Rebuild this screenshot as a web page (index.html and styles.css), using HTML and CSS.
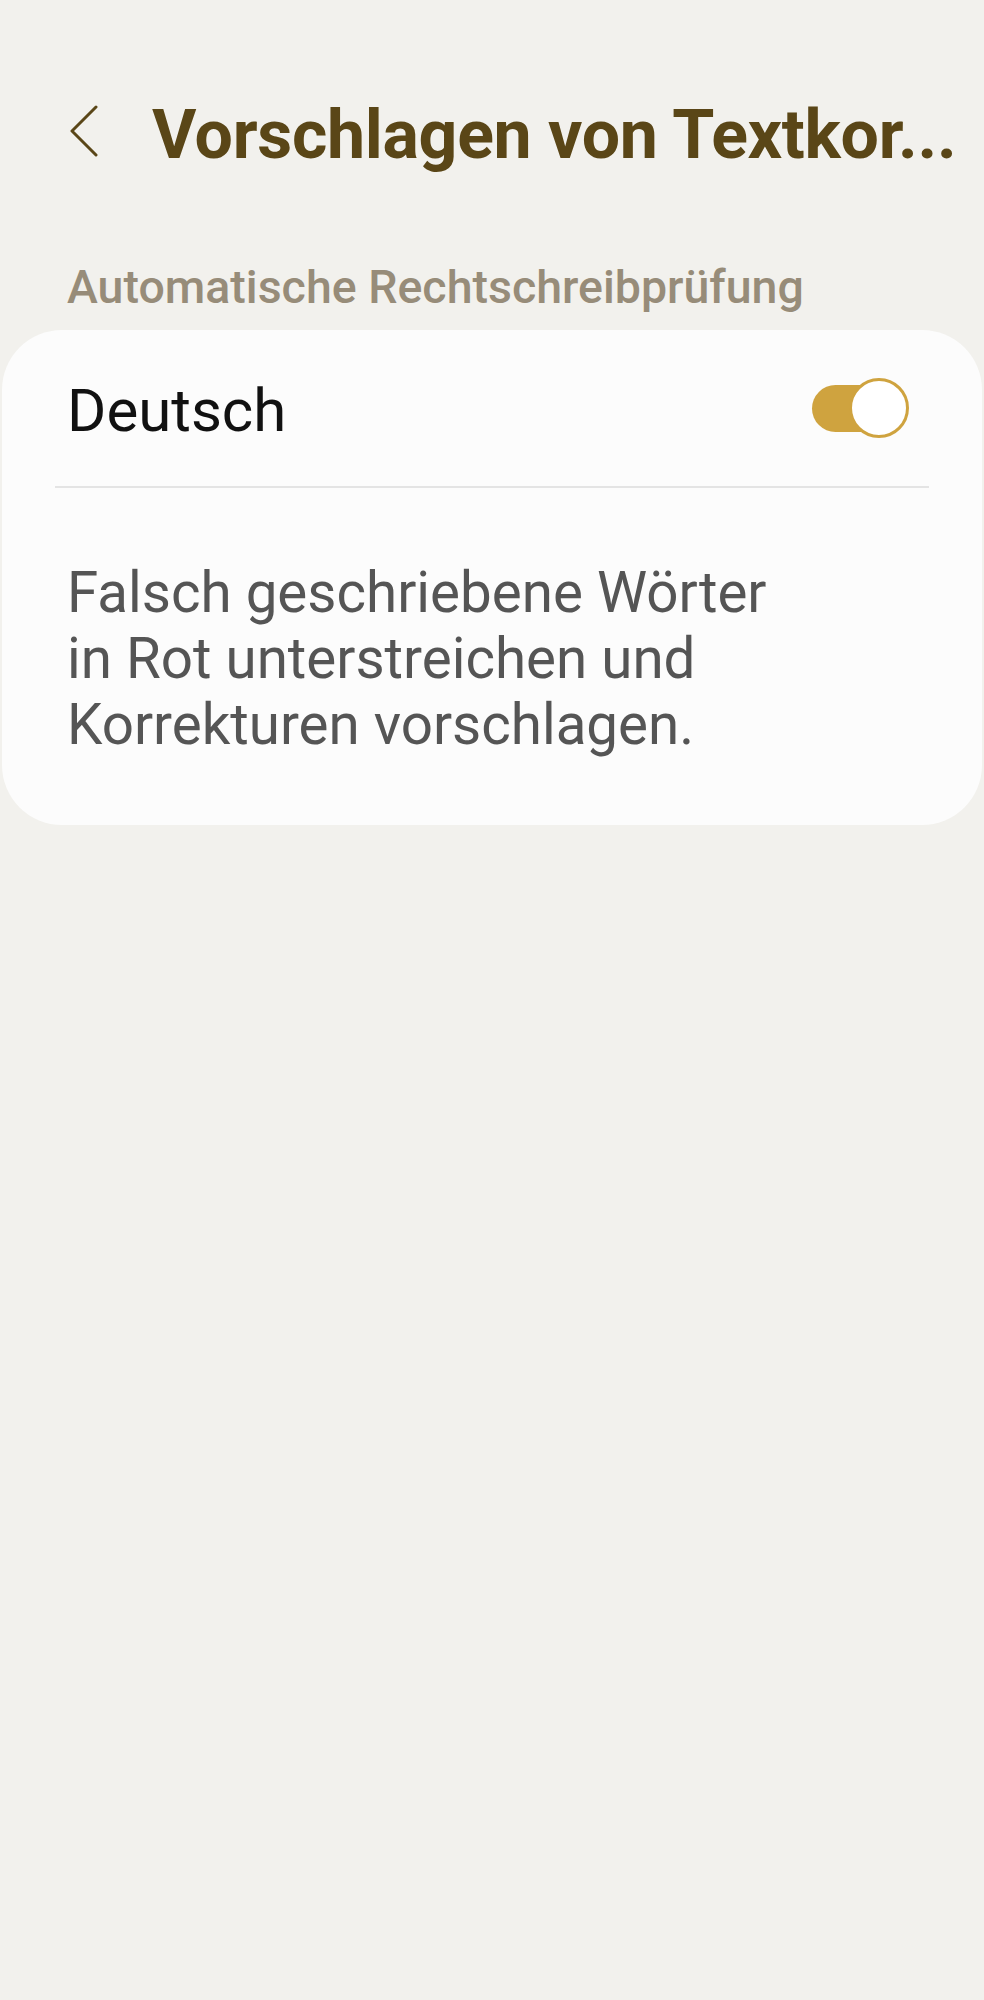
FILE: index.html
```
<!DOCTYPE html>
<html lang="de">
<head>
    <meta charset="UTF-8">
    <meta name="viewport" content="width=device-width, initial-scale=1.0">
    <title>Vorschlagen von Textkorrekturen</title>
    <link rel="stylesheet" href="styles.css">
</head>
<body>
    <header class="topbar">
        <button class="back" aria-label="Zurück">
            <svg width="30" height="52" viewBox="0 0 30 52">
                <path d="M27 2 L3 26 L27 50" fill="none" stroke="#5a4617" stroke-width="3" stroke-linecap="round" stroke-linejoin="round"/>
            </svg>
        </button>
        <h1 class="title" title="Vorschlagen von Textkorrekturen">Vorschlagen von Textkor...</h1>
    </header>

    <div class="section-label">Automatische Rechtschreibprüfung</div>

    <div class="card">
        <div class="row">
            <span class="row-label">Deutsch</span>
            <span class="switch">
                <span class="track"></span>
                <span class="knob"></span>
            </span>
        </div>
        <div class="divider"></div>
        <p class="description">Falsch geschriebene Wörter in Rot unterstreichen und Korrekturen vorschlagen.</p>
    </div>
</body>
</html>
```

FILE: styles.css
```
body {
    background: #f2f1ed;
    font-family: 'Roboto', 'Liberation Sans', Arial, sans-serif;
    margin: 0;
    min-height: 2000px;
}
.topbar {
    display: flex;
    align-items: center;
    padding: 95px 20px 0 69px;
}
.back {
    background: none;
    border: none;
    padding: 0;
    margin: 0 53px 8px 0;
    width: 30px;
    height: 52px;
    flex-shrink: 0;
}
.back svg {
    display: block;
}
.title {
    margin: 0;
    font-size: 68px;
    line-height: 80px;
    font-weight: 700;
    letter-spacing: -0.3px;
    color: #5a4617;
    white-space: nowrap;
}
.section-label {
    margin-top: 84px;
    padding-left: 67px;
    font-size: 46.5px;
    line-height: 56px;
    font-weight: 500;
    color: #978c79;
}
.card {
    margin: 15px 2px 0 2px;
    background: #fcfcfc;
    border-radius: 60px;
    padding: 45px 0 67px 0;
}
.row {
    display: flex;
    align-items: center;
    justify-content: space-between;
    padding: 0 73px 0 65px;
}
.row-label {
    font-size: 60px;
    line-height: 72px;
    color: #111;
}
.switch {
    position: relative;
    width: 97px;
    height: 60px;
    margin-bottom: 6px;
}
.track {
    position: absolute;
    left: 0;
    top: 7px;
    width: 86px;
    height: 47px;
    border-radius: 24px;
    background: #cfa33f;
}
.knob {
    position: absolute;
    right: 0;
    top: 0;
    width: 54px;
    height: 54px;
    border-radius: 50%;
    background: #fff;
    border: 3px solid #cfa33f;
}
.divider {
    height: 2px;
    background: #e4e4e4;
    margin: 39px 53px 0 53px;
}
.description {
    margin: 72px 0 0 0;
    padding-left: 65px;
    max-width: 720px;
    font-size: 56.5px;
    line-height: 66px;
    color: #555;
}
```
